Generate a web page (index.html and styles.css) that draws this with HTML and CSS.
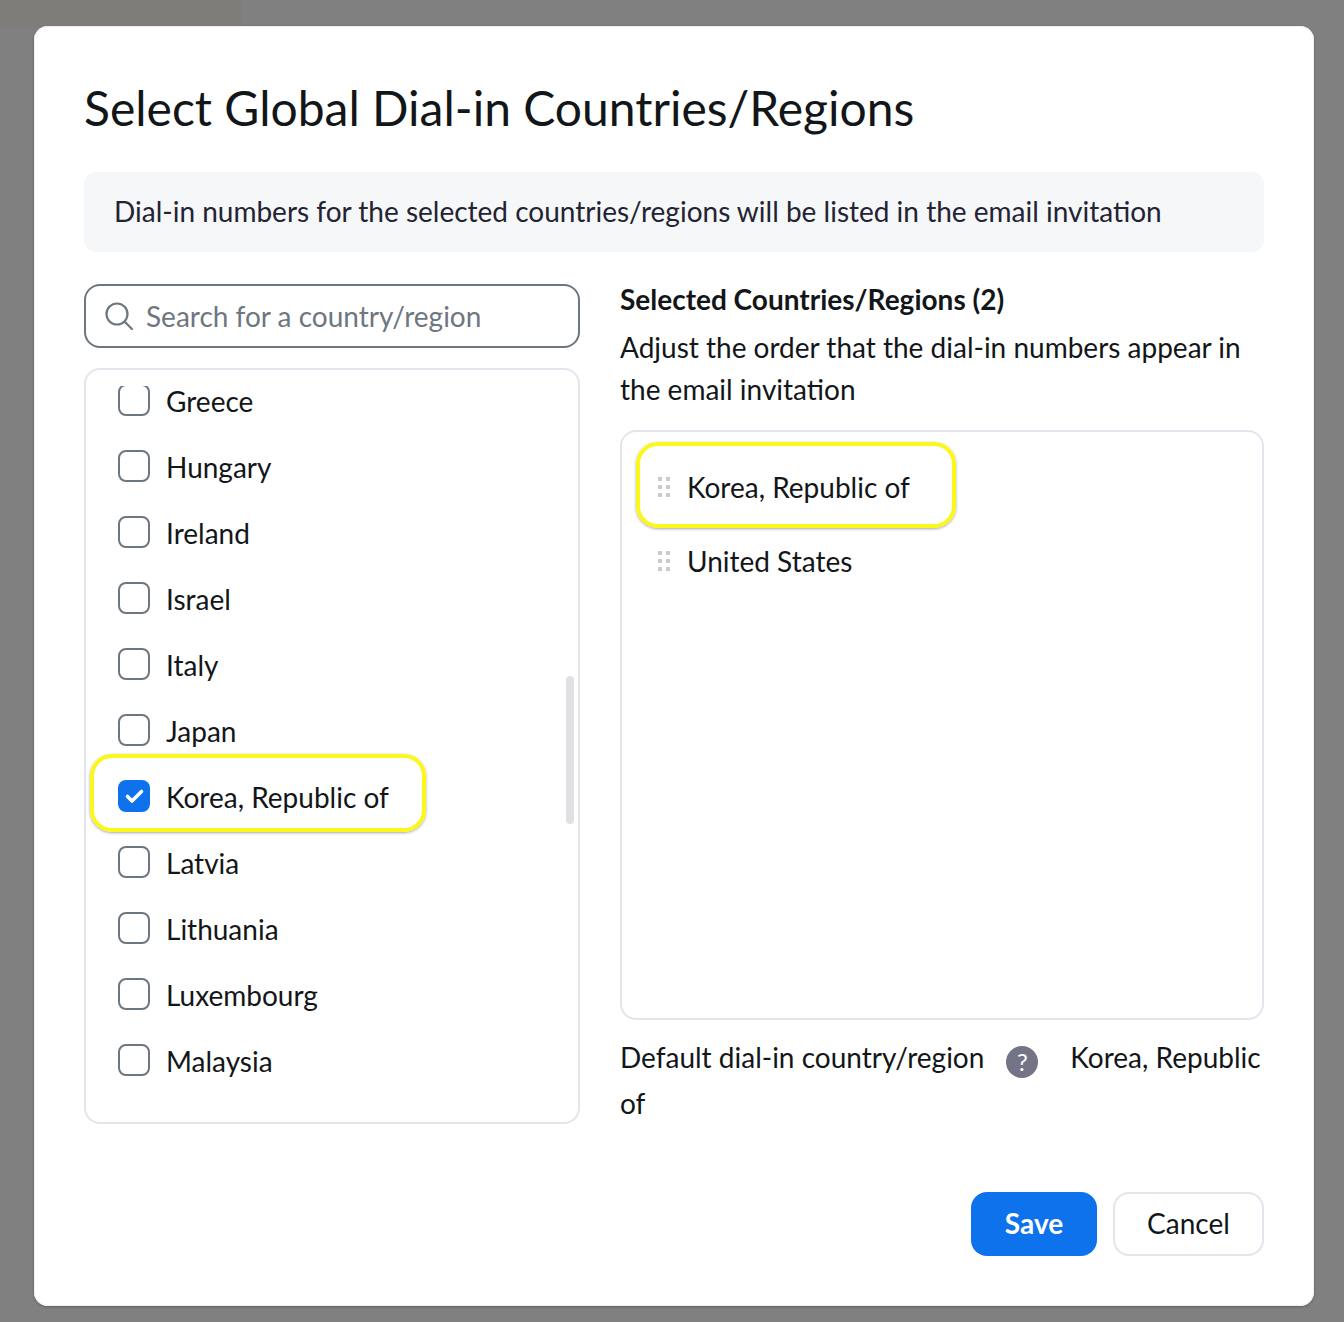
FILE: index.html
```html
<!DOCTYPE html>
<html lang="en">
  <head>
    <meta charset="UTF-8" />
    <meta name="viewport" content="width=device-width, initial-scale=1.0" />
    <title>Select Global Dial-in Countries/Regions</title>
    <link rel="stylesheet" href="styles.css">
  </head>
  <body>
    <div class="page_corner"></div>
    <div class="modal">
      <h1 class="modal_title">Select Global Dial-in Countries/Regions</h1>
      <div class="notice">Dial-in numbers for the selected countries/regions will be listed in the email invitation</div>
      <div class="columns">
        <div class="left_col">
          <div class="search">
            <svg class="search_icon" width="30" height="30" viewBox="0 0 30 30" fill="none" stroke="#6e7680" stroke-width="2.2" stroke-linecap="round">
              <circle cx="13" cy="13" r="10.5" />
              <path d="M21 21l7 7" />
            </svg>
            <span class="search_text">Search for a country/region</span>
          </div>
          <div class="country_box">
            <div class="scrollbar"></div>
            <div class="country_view">
              <ul class="country_list">
                <li class="country"><span class="check"></span>Greece</li>
                <li class="country"><span class="check"></span>Hungary</li>
                <li class="country"><span class="check"></span>Ireland</li>
                <li class="country"><span class="check"></span>Israel</li>
                <li class="country"><span class="check"></span>Italy</li>
                <li class="country"><span class="check"></span>Japan</li>
                <li class="country country_on">
                  <span class="highlight highlight_left"></span>
                  <span class="check check_on">
                    <svg width="32" height="32" viewBox="0 0 32 32" fill="none" stroke="#fff" stroke-width="3.6" stroke-linecap="round" stroke-linejoin="round">
                      <path d="M9.5 16.5l4.5 4.5 9.5-9.5" />
                    </svg>
                  </span>Korea, Republic of
                </li>
                <li class="country"><span class="check"></span>Latvia</li>
                <li class="country"><span class="check"></span>Lithuania</li>
                <li class="country"><span class="check"></span>Luxembourg</li>
                <li class="country"><span class="check"></span>Malaysia</li>
              </ul>
            </div>
          </div>
        </div>
        <div class="right_col">
          <div class="selected_title">Selected Countries/Regions (2)</div>
          <p class="selected_desc">Adjust the order that the dial-in numbers appear in the email invitation</p>
          <div class="selected_box">
            <div class="selected_item selected_first">
              <span class="highlight highlight_right"></span>
              <svg class="drag" width="14" height="22" viewBox="0 0 14 22" fill="#c9cbcf">
                <rect x="1" y="1" width="4" height="4" /><rect x="9" y="1" width="4" height="4" />
                <rect x="1" y="9" width="4" height="4" /><rect x="9" y="9" width="4" height="4" />
                <rect x="1" y="17" width="4" height="4" /><rect x="9" y="17" width="4" height="4" />
              </svg>
              Korea, Republic of
            </div>
            <div class="selected_item">
              <svg class="drag" width="14" height="22" viewBox="0 0 14 22" fill="#c9cbcf">
                <rect x="1" y="1" width="4" height="4" /><rect x="9" y="1" width="4" height="4" />
                <rect x="1" y="9" width="4" height="4" /><rect x="9" y="9" width="4" height="4" />
                <rect x="1" y="17" width="4" height="4" /><rect x="9" y="17" width="4" height="4" />
              </svg>
              United States
            </div>
          </div>
          <div class="default_line"><span>Default dial-in country/region</span><span class="help">?</span><span>Korea, Republic</span> <span>of</span></div>
        </div>
      </div>
      <div class="btn_group">
        <button class="btn btn_save">Save</button>
        <button class="btn btn_cancel">Cancel</button>
      </div>
    </div>
  </body>
</html>
```

FILE: styles.css
```css
html,
body {
  margin: 0;
  height: 100%;
}
body {
  background-color: #808080;
  font-family: "Lato", "Liberation Sans", sans-serif;
  color: #131619;
  overflow: hidden;
  position: relative;
  padding: 26px 30px 16px 34px;
  box-sizing: border-box;
}
.page_corner {
  position: absolute;
  top: 0;
  left: 0;
  width: 241px;
  height: 28px;
  background-color: #7f7d79;
}
.modal {
  position: relative;
  box-sizing: border-box;
  height: 1280px;
  background-color: #fff;
  border-radius: 14px;
  padding: 50px;
  box-shadow: inset 0 0 0 1px #eef0f0, 0 1px 3px rgba(0, 0, 0, 0.25);
}
.modal_title {
  margin: 0;
  font-size: 48px;
  font-weight: 400;
  line-height: 64px;
  height: 96px;
}
.notice {
  background-color: #f6f7f9;
  border-radius: 12px;
  height: 80px;
  line-height: 78px;
  padding-left: 30px;
  font-size: 28px;
  color: #232333;
}
.columns {
  display: flex;
  gap: 40px;
  margin-top: 32px;
}
.left_col {
  width: 496px;
  flex: none;
}
.right_col {
  flex: 1;
}
.search {
  box-sizing: border-box;
  height: 64px;
  border: 2px solid #6e7680;
  border-radius: 16px;
  display: flex;
  align-items: center;
  padding-left: 18px;
  gap: 12px;
  font-size: 28px;
  color: #6e7680;
}
.country_box {
  position: relative;
  box-sizing: border-box;
  height: 756px;
  margin-top: 20px;
  border: 2px solid #e4e5ec;
  border-radius: 16px;
  padding-top: 16px;
}
.country_view {
  height: 736px;
  overflow: hidden;
}
.country_list {
  list-style: none;
  margin: -18px 0 0;
  padding: 0 0 0 32px;
}
.country {
  position: relative;
  display: flex;
  align-items: center;
  height: 66px;
  font-size: 28px;
}
.check {
  box-sizing: border-box;
  width: 32px;
  height: 32px;
  border: 2px solid #6e7680;
  border-radius: 8px;
  margin: -2px 16px 0 0;
  flex: none;
}
.check_on {
  background-color: #0e72ed;
  border: none;
}
.check_on svg {
  display: block;
}
.scrollbar {
  position: absolute;
  top: 306px;
  right: 4px;
  width: 8px;
  height: 148px;
  border-radius: 4px;
  background-color: #dfe1e4;
}
.highlight {
  position: absolute;
  box-sizing: border-box;
  border: 4px solid #fbf71a;
  border-radius: 22px;
  box-shadow: 0 1px 3px rgba(0, 0, 0, 0.35);
  pointer-events: none;
}
.highlight_left {
  top: -10px;
  left: -28px;
  width: 336px;
  height: 78px;
}
.highlight_right {
  top: -8px;
  left: -1px;
  width: 320px;
  height: 86px;
}
.selected_title {
  margin-top: -1px;
  font-size: 28px;
  font-weight: 700;
  line-height: 32px;
}
.selected_desc {
  margin: 11px 0 0;
  font-size: 28px;
  line-height: 42px;
}
.selected_box {
  box-sizing: border-box;
  height: 590px;
  margin-top: 20px;
  border: 2px solid #e4e5ec;
  border-radius: 16px;
  padding: 18px 15px;
}
.selected_item {
  position: relative;
  display: flex;
  align-items: center;
  height: 74px;
  font-size: 28px;
  padding-left: 20px;
}
.drag {
  margin-right: 16px;
  flex: none;
}
.default_line {
  margin-top: 14px;
  font-size: 28px;
  line-height: 46px;
}
.help {
  display: inline-block;
  width: 32px;
  height: 32px;
  border-radius: 50%;
  background-color: #747487;
  color: #fff;
  font-size: 24px;
  line-height: 32px;
  text-align: center;
  vertical-align: -3px;
  margin: 0 32px 0 22px;
}
.btn_group {
  position: absolute;
  right: 50px;
  bottom: 50px;
  display: flex;
  gap: 16px;
}
.btn {
  box-sizing: border-box;
  height: 64px;
  border-radius: 16px;
  padding-bottom: 3px;
  font-family: inherit;
  font-size: 28px;
}
.btn_save {
  width: 126px;
  border: none;
  background-color: #0e72ed;
  color: #fff;
  font-weight: 700;
}
.btn_cancel {
  width: 151px;
  border: 2px solid #e4e5ec;
  background-color: #fff;
  color: #131619;
}
```
